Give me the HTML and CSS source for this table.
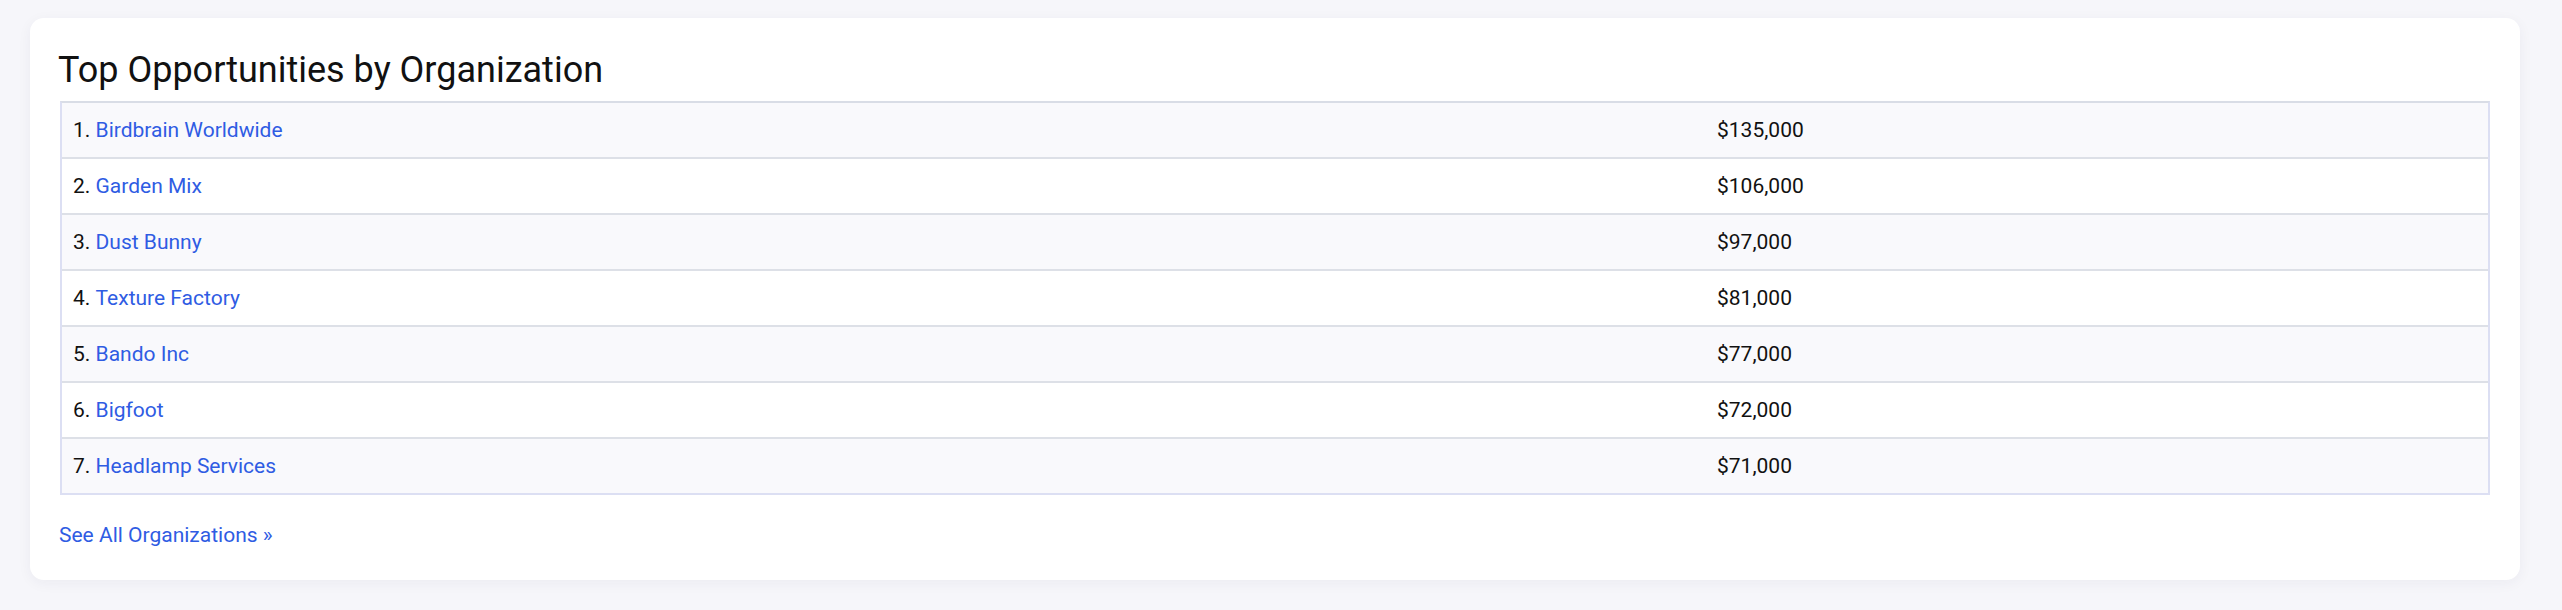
FILE: index.html
```html
<!DOCTYPE html>
<html lang="en">
<head>
<meta charset="utf-8">
<title>Top Opportunities by Organization</title>
<link rel="stylesheet" href="styles.css">
</head>
<body>
<section class="card">
  <h2 class="card-title">Top Opportunities by Organization</h2>
  <div class="table">
    <div class="row odd"><div class="cell name">1. <a href="#">Birdbrain Worldwide</a></div><div class="cell amount">$135,000</div></div>
    <div class="row"><div class="cell name">2. <a href="#">Garden Mix</a></div><div class="cell amount">$106,000</div></div>
    <div class="row odd"><div class="cell name">3. <a href="#">Dust Bunny</a></div><div class="cell amount">$97,000</div></div>
    <div class="row"><div class="cell name">4. <a href="#">Texture Factory</a></div><div class="cell amount">$81,000</div></div>
    <div class="row odd"><div class="cell name">5. <a href="#">Bando Inc</a></div><div class="cell amount">$77,000</div></div>
    <div class="row"><div class="cell name">6. <a href="#">Bigfoot</a></div><div class="cell amount">$72,000</div></div>
    <div class="row odd"><div class="cell name">7. <a href="#">Headlamp Services</a></div><div class="cell amount">$71,000</div></div>
  </div>
  <a class="see-all" href="#">See All Organizations »</a>
</section>
</body>
</html>
```

FILE: styles.css
```css
* { box-sizing: border-box; }

html, body {
  margin: 0;
  background: #f6f6fa;
}

body {
  padding: 18px 42px 30px 30px;
  font-family: Roboto, "Liberation Sans", Arial, sans-serif;
  color: #111;
}

.card {
  background: #fff;
  border-radius: 14px;
  box-shadow: 0 3px 14px rgba(30, 30, 80, 0.05);
  padding: 31px 30px 33px 30px;
}

.card-title {
  margin: 0 0 10px -2px;
  font-size: 36px;
  font-weight: 400;
  line-height: 42px;
  color: #111;
}

.table {
  border: 2px solid #dcdff3;
  border-top-color: #d9dde6;
}

.row {
  display: grid;
  grid-template-columns: 1644px 1fr;
  background: #fff;
  border-top: 2px solid #dde0e7;
}

.row:first-child {
  border-top: none;
}

.row.odd {
  background: #f9f9fc;
}

.cell {
  padding: 0 11px;
  height: 54px;
  display: flex;
  align-items: center;
  font-size: 21px;
  line-height: 24px;
  color: #111;
  white-space: pre;
}

a {
  color: #2f5ce3;
  text-decoration: none;
}

.see-all {
  display: inline-block;
  margin-top: 28px;
  margin-left: -1px;
  font-size: 21px;
  line-height: 24px;
}
```
